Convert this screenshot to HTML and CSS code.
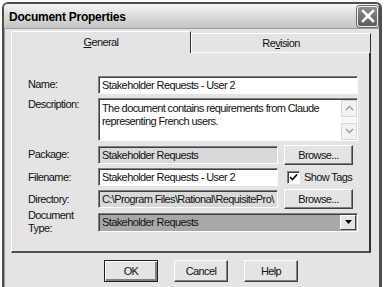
FILE: index.html
```html
<!DOCTYPE html>
<html lang="en">
<head>
    <meta charset="UTF-8">
    <title>Document Properties</title>
    <link rel="stylesheet" href="styles.css">
</head>
<body>
    <div class="window">
        <div class="titlebar">
            <span class="title">Document Properties</span>
            <div class="close">
                <svg width="14" height="14" viewBox="0 0 14 14"><path d="M2 2 L12 12 M12 2 L2 12" stroke="#fff" stroke-width="2.6" stroke-linecap="square"/></svg>
            </div>
        </div>
        <div class="client">
            <div class="tabs">
                <div class="tab active"><u>G</u>eneral</div>
                <div class="tab">Re<u>v</u>ision</div>
            </div>
            <div class="panel">
                <div class="form">
                    <label class="lbl">Name:</label>
                    <div class="field wide">Stakeholder Requests - User 2</div>

                    <label class="lbl top">Description:</label>
                    <div class="field wide memo">
                        <div class="memo-text">The document contains requirements from Claude representing French users.</div>
                        <div class="scroll">
                            <div class="sbtn"><svg width="9" height="6" viewBox="0 0 9 6"><path d="M1 5 L4.5 1.5 L8 5" fill="none" stroke="#9a9a9a" stroke-width="1.4"/></svg></div>
                            <div class="strack"></div>
                            <div class="sbtn"><svg width="9" height="6" viewBox="0 0 9 6"><path d="M1 1 L4.5 4.5 L8 1" fill="none" stroke="#9a9a9a" stroke-width="1.4"/></svg></div>
                        </div>
                    </div>

                    <label class="lbl">Package:</label>
                    <div class="field disabled">Stakeholder Requests</div>
                    <div class="side"><button class="btn browse">Browse...</button></div>

                    <label class="lbl">Filename:</label>
                    <div class="field">Stakeholder Requests - User 2</div>
                    <div class="side check">
                        <span class="box"><svg width="9" height="9" viewBox="0 0 9 9"><path d="M1 4 L3.5 6.5 L8 1.5" fill="none" stroke="#000" stroke-width="1.6"/></svg></span>
                        <span>Show Tags</span>
                    </div>

                    <label class="lbl">Directory:</label>
                    <div class="field disabled">C:\Program Files\Rational\RequisitePro\</div>
                    <div class="side"><button class="btn browse">Browse...</button></div>

                    <label class="lbl">Document<br>Type:</label>
                    <div class="field wide select">
                        <span class="select-text">Stakeholder Requests</span>
                        <span class="drop"><svg width="7" height="4" viewBox="0 0 7 4"><path d="M0 0 H7 L3.5 4 Z" fill="#000"/></svg></span>
                    </div>
                </div>
            </div>
            <div class="actions">
                <button class="btn default">OK</button>
                <button class="btn">Cancel</button>
                <button class="btn">Help</button>
            </div>
        </div>
    </div>
</body>
</html>
```

FILE: styles.css
```css
body {
    margin: 0;
    padding: 0;
    background: #ffffff;
    font-family: 'Liberation Sans', Arial, sans-serif;
    font-size: 11px;
    letter-spacing: -0.6px;
    color: #111;
}
.window {
    margin: 2px 2px 0 2px;
    width: 380px;
    height: 285px;
    box-sizing: border-box;
    border: 2px solid #4e4e4e;
    border-right-width: 3px;
    border-bottom: none;
    border-radius: 6px 6px 0 0;
    background: #e4e4e4;
    display: flex;
    flex-direction: column;
    overflow: hidden;
}
.titlebar {
    height: 24px;
    flex: none;
    display: flex;
    align-items: center;
    justify-content: space-between;
    padding: 0 1px 0 5px;
    background: linear-gradient(to bottom, #f6f6f6 0%, #e2e2e2 35%, #c4c4c4 100%);
    border-bottom: 1px solid #9c9c9c;
}
.title {
    font-size: 12px;
    font-weight: bold;
    letter-spacing: -0.25px;
    color: #000;
    padding-top: 1px;
}
.close {
    width: 19px;
    height: 19px;
    border: 1px solid #f0f0f0;
    border-radius: 3px;
    background: linear-gradient(to bottom, #8c8c8c, #5c5c5c);
    box-shadow: 0 0 0 1px #6a6a6a;
    display: flex;
    align-items: center;
    justify-content: center;
}
.client {
    flex: 1;
    padding: 2px 8px 0 6px;
    border-left: 1px solid #9a9a9a;
}
.tabs {
    display: flex;
    height: 21px;
    align-items: flex-end;
}
.tab {
    flex: 1;
    height: 19px;
    box-sizing: border-box;
    display: flex;
    align-items: center;
    justify-content: center;
    border-top: 1px solid #fff;
    border-left: 1px solid #fff;
    border-right: 1px solid #303030;
    background: #e4e4e4;
}
.tab.active {
    height: 22px;
    margin-bottom: -1px;
    border-right: 1px solid #303030;
    position: relative;
    z-index: 1;
    padding-bottom: 2px;
}
.panel {
    height: 201px;
    box-sizing: border-box;
    border-top: 1px solid #fff;
    border-left: 1px solid #fff;
    border-right: 2px solid #303030;
    border-bottom: 2px solid #505050;
    padding: 21px 11px 0 16px;
}
.form {
    display: grid;
    grid-template-columns: 70px 180px 80px;
    grid-template-rows: 21px 48px 23px 22px 22px 24px;
    align-items: center;
}
.lbl {
    line-height: 13px;
}
.lbl.top {
    align-self: start;
    padding-top: 3px;
}
.field {
    height: 18px;
    box-sizing: border-box;
    background: #fff;
    border-top: 1px solid #808080;
    border-left: 1px solid #808080;
    border-right: 1px solid #fff;
    border-bottom: 1px solid #fff;
    box-shadow: inset 1px 1px 0 #404040;
    padding: 2px 0 0 3px;
    white-space: nowrap;
    overflow: hidden;
}
.field.wide {
    grid-column: 2 / 4;
}
.field.disabled {
    background: #d9d9d9;
}
.memo {
    height: 43px;
    display: flex;
    padding: 0;
}
.memo-text {
    flex: 1;
    white-space: normal;
    padding: 3px 0 0 3px;
    line-height: 13px;
}
.scroll {
    width: 16px;
    display: flex;
    flex-direction: column;
    padding: 1px 0 0;
}
.sbtn {
    height: 17px;
    background: #f2f2f2;
    border: 1px solid #d8d8d8;
    box-sizing: border-box;
    display: flex;
    align-items: center;
    justify-content: center;
}
.strack {
    flex: 1;
    background: #f7f7f7;
}
.side {
    padding-left: 6px;
}
.btn {
    font-family: inherit;
    font-size: 11px;
    letter-spacing: -0.6px;
    color: #111;
    background: #e4e4e4;
    border-top: 1px solid #fff;
    border-left: 1px solid #fff;
    border-right: 1px solid #404040;
    border-bottom: 1px solid #404040;
    box-shadow: inset -1px -1px 0 #808080;
    padding: 0;
}
.browse {
    width: 69px;
    height: 20px;
}
.check {
    display: flex;
    align-items: center;
    gap: 4px;
    padding-left: 9px;
}
.box {
    width: 13px;
    height: 13px;
    box-sizing: border-box;
    background: #fff;
    border-top: 1px solid #808080;
    border-left: 1px solid #808080;
    border-right: 1px solid #fff;
    border-bottom: 1px solid #fff;
    box-shadow: inset 1px 1px 0 #404040;
    display: flex;
    align-items: center;
    justify-content: center;
}
.select {
    height: 19px;
    display: flex;
    align-items: center;
    padding: 0 1px 0 3px;
    background: #a8a8a8;
}
.select-text {
    flex: 1;
    color: #111;
}
.drop {
    width: 16px;
    height: 15px;
    background: #e4e4e4;
    border-top: 1px solid #fff;
    border-left: 1px solid #fff;
    border-right: 1px solid #404040;
    border-bottom: 1px solid #404040;
    box-sizing: border-box;
    display: flex;
    align-items: center;
    justify-content: center;
}
.actions {
    display: flex;
    gap: 16px;
    padding: 7px 0 0 93px;
}
.actions .btn {
    width: 54px;
    height: 22px;
}
.btn.default {
    border: 1px solid #202020;
    box-shadow: inset 1px 1px 0 #fff, inset -2px -2px 0 #808080;
}
```
